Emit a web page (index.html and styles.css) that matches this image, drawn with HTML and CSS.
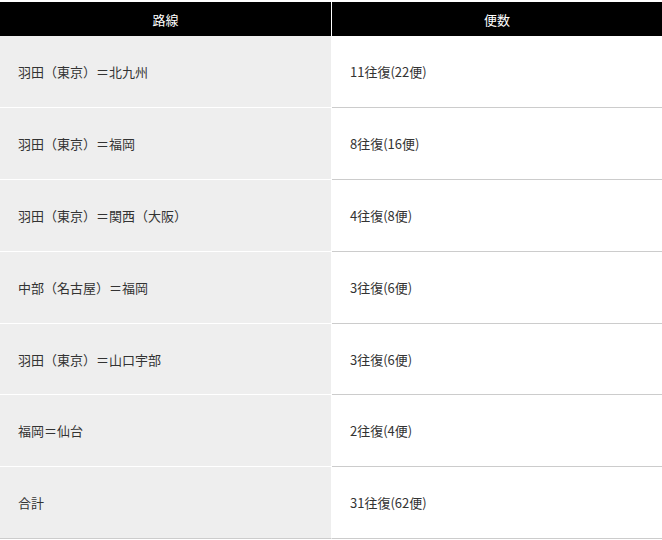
FILE: index.html
```
<!DOCTYPE html>
<html lang="ja">
<head>
<meta charset="utf-8">
<link rel="stylesheet" href="styles.css">
</head>
<body>
<table class="routes">
  <thead>
    <tr>
      <th class="head head-route">路線</th>
      <th class="head head-count">便数</th>
    </tr>
  </thead>
  <tbody>
    <tr><td class="route">羽田（東京）＝北九州</td><td class="count">11往復(22便)</td></tr>
    <tr><td class="route">羽田（東京）＝福岡</td><td class="count">8往復(16便)</td></tr>
    <tr><td class="route">羽田（東京）＝関西（大阪）</td><td class="count">4往復(8便)</td></tr>
    <tr><td class="route">中部（名古屋）＝福岡</td><td class="count">3往復(6便)</td></tr>
    <tr><td class="route">羽田（東京）＝山口宇部</td><td class="count">3往復(6便)</td></tr>
    <tr><td class="route">福岡＝仙台</td><td class="count">2往復(4便)</td></tr>
    <tr class="total"><td class="route">合計</td><td class="count">31往復(62便)</td></tr>
  </tbody>
</table>
</body>
</html>
```
FILE: styles.css
```
html, body {
  margin: 0;
  padding: 0;
  background: #fff;
}
body {
  padding-top: 2px;
  font-family: "Noto Sans CJK JP", "Noto Sans", sans-serif;
  font-size: 13px;
  color: #333;
}
.routes {
  width: 662px;
  border-collapse: separate;
  border-spacing: 0;
  table-layout: fixed;
}
.head {
  height: 34px;
  padding: 0;
  background: #000;
  color: #fff;
  font-weight: normal;
  text-align: center;
  vertical-align: middle;
  line-height: 1;
}
.head-route {
  width: 331px;
  border-right: 1px solid #fff;
}
.route, .count {
  height: 70.9px;
  padding: 0 0 0 18px;
  vertical-align: middle;
  line-height: 1;
}
.route {
  background: #eee;
  border-right: 1px solid #fff;
  border-bottom: 1px solid #fff;
}
.count {
  background: #fff;
  border-bottom: 1px solid #ccc;
}
.total .route {
  border-bottom-color: #ccc;
}
```
